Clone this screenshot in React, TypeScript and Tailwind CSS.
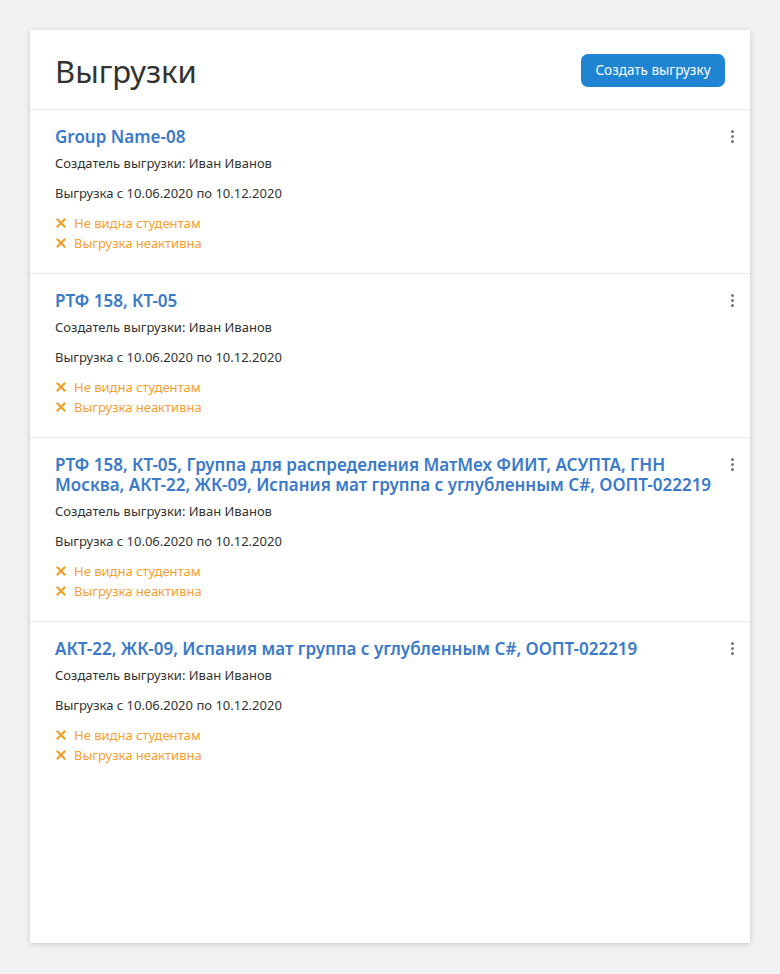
import React from 'react';

interface Upload {
  title: string;
  author: string;
  from: string;
  to: string;
}

const uploads: Upload[] = [
  { title: 'Group Name-08', author: 'Иван Иванов', from: '10.06.2020', to: '10.12.2020' },
  { title: 'РТФ 158, КТ-05', author: 'Иван Иванов', from: '10.06.2020', to: '10.12.2020' },
  {
    title:
      'РТФ 158, КТ-05, Группа для распределения МатМех ФИИТ, АСУПТА, ГНН Москва, АКТ-22, ЖК-09, Испания мат группа с углубленным C#, ООПТ-022219',
    author: 'Иван Иванов',
    from: '10.06.2020',
    to: '10.12.2020',
  },
  {
    title: 'АКТ-22, ЖК-09, Испания мат группа с углубленным C#, ООПТ-022219',
    author: 'Иван Иванов',
    from: '10.06.2020',
    to: '10.12.2020',
  },
];

const Cross = () => (
  <svg width="10" height="10" viewBox="0 0 10 10" className="shrink-0">
    <path d="M1.5 1.5 L8.5 8.5 M8.5 1.5 L1.5 8.5" stroke="#f39c1f" strokeWidth="2" strokeLinecap="square" />
  </svg>
);

const Kebab = () => (
  <button className="flex flex-col items-center gap-[2px] px-1 py-[1px]">
    <span className="block h-[3px] w-[3px] rounded-full bg-[#777]" />
    <span className="block h-[3px] w-[3px] rounded-full bg-[#777]" />
    <span className="block h-[3px] w-[3px] rounded-full bg-[#777]" />
  </button>
);

const UploadItem = ({ item, last }: { item: Upload; last: boolean }) => (
  <div className={last ? 'pl-[25px] pr-[12px] pt-[17px] pb-[20px]' : 'border-b border-[#ececec] pl-[25px] pr-[12px] pt-[17px] pb-[20px]'}>
    <div className="flex items-start justify-between gap-3">
      <h2 className="text-[17px] leading-[20px] font-semibold text-[#3b79c9]">{item.title}</h2>
      <div className="pt-[2px]">
        <Kebab />
      </div>
    </div>
    <p className="mt-[6px] text-[13px] leading-[20px] text-[#333]">Создатель выгрузки: {item.author}</p>
    <p className="mt-[10px] text-[13px] leading-[20px] text-[#333]">
      Выгрузка с {item.from} по {item.to}
    </p>
    <div className="mt-[10px] text-[13px] leading-[20px] text-[#f5a030]">
      <div className="flex items-center gap-[8px] pl-[1px]">
        <Cross />
        <span>Не видна студентам</span>
      </div>
      <div className="flex items-center gap-[8px] pl-[1px]">
        <Cross />
        <span>Выгрузка неактивна</span>
      </div>
    </div>
  </div>
);

export default function App() {
  return (
    <div className="min-h-screen bg-[#f2f2f2] px-[30px] pt-[30px] pb-[30px] font-['Noto_Sans',sans-serif]">
      <div className="h-[913px] bg-white shadow-[0_1px_6px_rgba(0,0,0,0.18)]">
        <div className="flex items-center justify-between border-b border-[#ececec] px-[25px] h-[80px]">
          <h1 className="pt-[4px] text-[31px] font-normal text-[#333] leading-none">Выгрузки</h1>
          <button className="mt-[2px] h-[33px] w-[144px] rounded-[7px] bg-[#1f84d1] text-[13.5px] text-white">
            Создать выгрузку
          </button>
        </div>
        {uploads.map((u, i) => (
          <UploadItem key={i} item={u} last={i === uploads.length - 1} />
        ))}
      </div>
    </div>
  );
}
